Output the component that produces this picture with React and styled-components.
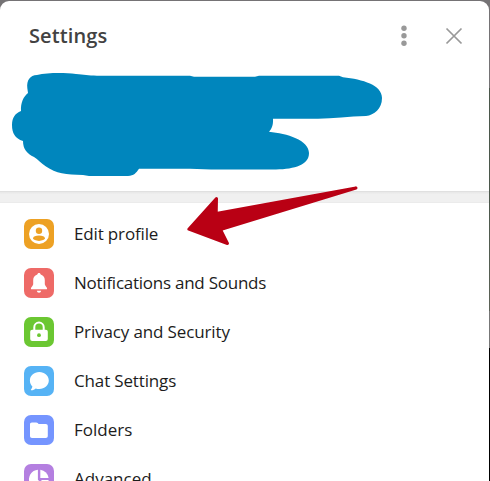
import React from "react";
import styled, { createGlobalStyle } from "styled-components";

const GlobalStyle = createGlobalStyle`
  * { box-sizing: border-box; }
  body { margin: 0; overflow: hidden; background: #777; }
`;

const Backdrop = styled.div`
  position: relative;
  width: 490px;
  height: 481px;
  overflow: hidden;
  padding: 1px 1px 0 0;
  background: linear-gradient(
    #757375 0 88px, #4b574b 88px 200px, #5c6257 311px, #777 311px 348px, #000 348px
  );
  font-family: "Open Sans", sans-serif;
`;

const Panel = styled.main`
  display: flex;
  flex-direction: column;
  min-height: 480px;
  background: #fff;
  border-radius: 9px 9px 0 0;
`;

const Header = styled.header`
  display: flex;
  align-items: center;
  height: 70px;
  padding: 0 22px 0 29px;
`;

const Title = styled.h1`
  flex: 1;
  margin: 0;
  font-size: 20px;
  line-height: 28px;
  font-weight: 600;
  letter-spacing: 0.1px;
  color: #424242;
`;

const HeaderButton = styled.button`
  display: flex;
  align-items: center;
  justify-content: center;
  width: 26px;
  height: 26px;
  margin-left: ${(p) => p.$gap || 0}px;
  padding: 0;
  border: 0;
  background: none;
`;

const Profile = styled.section`
  height: 120px;
  svg { display: block; }
`;

const Divider = styled.div`
  height: 12px;
  flex: none;
  background: linear-gradient(#e0e0e0 0 1px, #e9e9e9 1px 2px, #f0f0f0 3px 11px, #ebebeb 11px);
`;

const Menu = styled.nav`
  display: flex;
  flex-direction: column;
  padding-top: 6px;
`;

const Row = styled.a`
  display: flex;
  align-items: center;
  gap: 20px;
  height: 49px;
  padding-left: 24px;
  font-size: 17px;
  line-height: 24px;
  letter-spacing: ${(p) => p.$tracking || 0}px;
  color: #1c1c1c;
`;

const IconTile = styled.span`
  display: flex;
  width: 30px;
  height: 30px;
  border-radius: 7px;
  background: ${(p) => p.$color};
`;

const Arrow = styled.svg`
  position: absolute;
  left: 180px;
  top: 180px;
`;

const items = [
  {
    label: "Edit profile",
    tracking: -0.15,
    color: "#eda124",
    icon: (c) => (
      <>
        <circle cx="15" cy="15" r="10" fill="#fff" />
        <circle cx="15" cy="11.7" r="3.2" fill={c} />
        <ellipse cx="15" cy="19.2" rx="5.9" ry="2.7" fill={c} />
      </>
    ),
  },
  {
    label: "Notifications and Sounds",
    tracking: -0.25,
    color: "#ee6a67",
    icon: () => (
      <g fill="#fff">
        <path d="M15 5c.9 0 1.600.6 1.700 1.600C19.600 7.500 20.800 9.600 20.800 12.300v3.900c0 1.500 2.300 3 2.300 4.200 0 .6-.4.9-1 .9H7.900c-.6 0-1-.3-1-.9 0-1.200 2.300-2.700 2.300-4.200v-3.900c0-2.700 1.200-4.800 4.100-5.700C13.400 5.600 14.100 5 15 5z" />
        <path d="M12.900 22.800h4.200c-.1 1.200-.9 2-2.100 2s-2-.8-2.100-2z" />
      </g>
    ),
  },
  {
    label: "Privacy and Security",
    tracking: -0.13,
    color: "#6bc732",
    icon: (c) => (
      <>
        <path d="M10.300 14V10.300a4.700 4.700 0 0 1 9.400 0V14" fill="none" stroke="#fff" strokeWidth="2" />
        <rect x="6.200" y="12.700" width="17.600" height="11.300" rx="2" fill="#fff" />
        <circle cx="15" cy="18.200" r="1.900" fill={c} />
      </>
    ),
  },
  {
    label: "Chat Settings",
    tracking: -0.15,
    color: "#56b3f5",
    icon: () => (
      <path d="M15.300 6.100c5.300 0 9.500 3.700 9.500 8.400s-4.200 8.500-9.500 8.500c-1.300 0-2.500-.2-3.600-.6-1.200 1.200-2.600 1.800-4.400 1.800-.5 0-.6-.4-.3-.7.8-.8 1.300-1.700 1.400-2.900C6.800 19 5.900 16.900 5.900 14.500c0-4.700 4.100-8.400 9.400-8.400z" fill="#fff" />
    ),
  },
  {
    label: "Folders",
    color: "#7595ff",
    icon: () => (
      <path d="M6 9.300c0-1.200.8-1.900 1.900-1.900h4.200c.7 0 1.200.2 1.600.7l.9 1h7.200c1.200 0 2 .8 2 2v9.900c0 1.200-.8 2-2 2H8c-1.200 0-2-.8-2-2z" fill="#fff" />
    ),
  },
  {
    label: "Advanced",
    color: "#b47fe0",
    icon: () => (
      <g fill="#fff">
        <path d="M13.900 5.700v10.100l7 7A9.700 9.700 0 1 1 13.900 5.700z" />
        <path d="M16.300 5.700a9.500 9.500 0 0 1 8.300 8.400h-8.300z" />
        <path d="M17 16.100h7.600a9.500 9.500 0 0 1-2.300 5.300z" />
      </g>
    ),
  },
];

export default function App() {
  return (
    <Backdrop>
      <GlobalStyle />
      <Panel>
        <Header>
          <Title>Settings</Title>
          <HeaderButton aria-label="More">
            <svg width="26" height="26" fill="#999">
              <circle cx="13" cy="5.200" r="2.700" />
              <circle cx="13" cy="12.700" r="2.700" />
              <circle cx="13" cy="20.200" r="2.700" />
            </svg>
          </HeaderButton>
          <HeaderButton aria-label="Close" $gap={24}>
            <svg width="26" height="26" fill="none" stroke="#999" strokeWidth="1.700">
              <path d="M5.500 5.500l15 15M20.500 5.500l-15 15" />
            </svg>
          </HeaderButton>
        </Header>
        <Profile>
          <svg width="489" height="120" viewBox="0 71 489 120" aria-hidden="true">
            <path
              fill="#0086bd"
              d="M28 93L27.300 88C26.500 80 30 75.500 37 75C48 72.500 64 72.500 76 74C84 74.500 88 75.500 97 75.700H190L194 76.700H255L259 75.800H339L343 77.300C363 79.500 382 85 382 98C382 109 374 115 366 116C349 116.500 333 118.500 318 118.800H273C273.300 125 272 128.500 269 131.700C287 133.500 309 140 309 153C309 165 295 169 276 169.500H211L190 168.700H139C136 173 134 175.700 128 175.900H89L83 175C66 174.500 56 173.500 46 166.500C41 163.500 38 159.500 34 157C27 153.500 23 149 23 141C15 138.500 12 133 12 125C12 117.500 15 113.500 21 111C20.500 103 23.500 96.500 28 93Z"
            />
          </svg>
        </Profile>
        <Divider />
        <Menu>
          {items.map((item) => (
            <Row key={item.label} $tracking={item.tracking}>
              <IconTile $color={item.color}>
                <svg width="30" height="30">{item.icon(item.color)}</svg>
              </IconTile>
              {item.label}
            </Row>
          ))}
        </Menu>
      </Panel>
      <Arrow width="185" height="70" viewBox="180 180 185 70" aria-hidden="true">
        <path
          d="M188.800 229.200L216.500 198.500L216.200 213.500L356 188L220.500 229.500L227.500 243.500Z"
          fill="#b90014"
          stroke="#b90014"
          strokeWidth="3"
          strokeLinejoin="round"
        />
      </Arrow>
    </Backdrop>
  );
}
